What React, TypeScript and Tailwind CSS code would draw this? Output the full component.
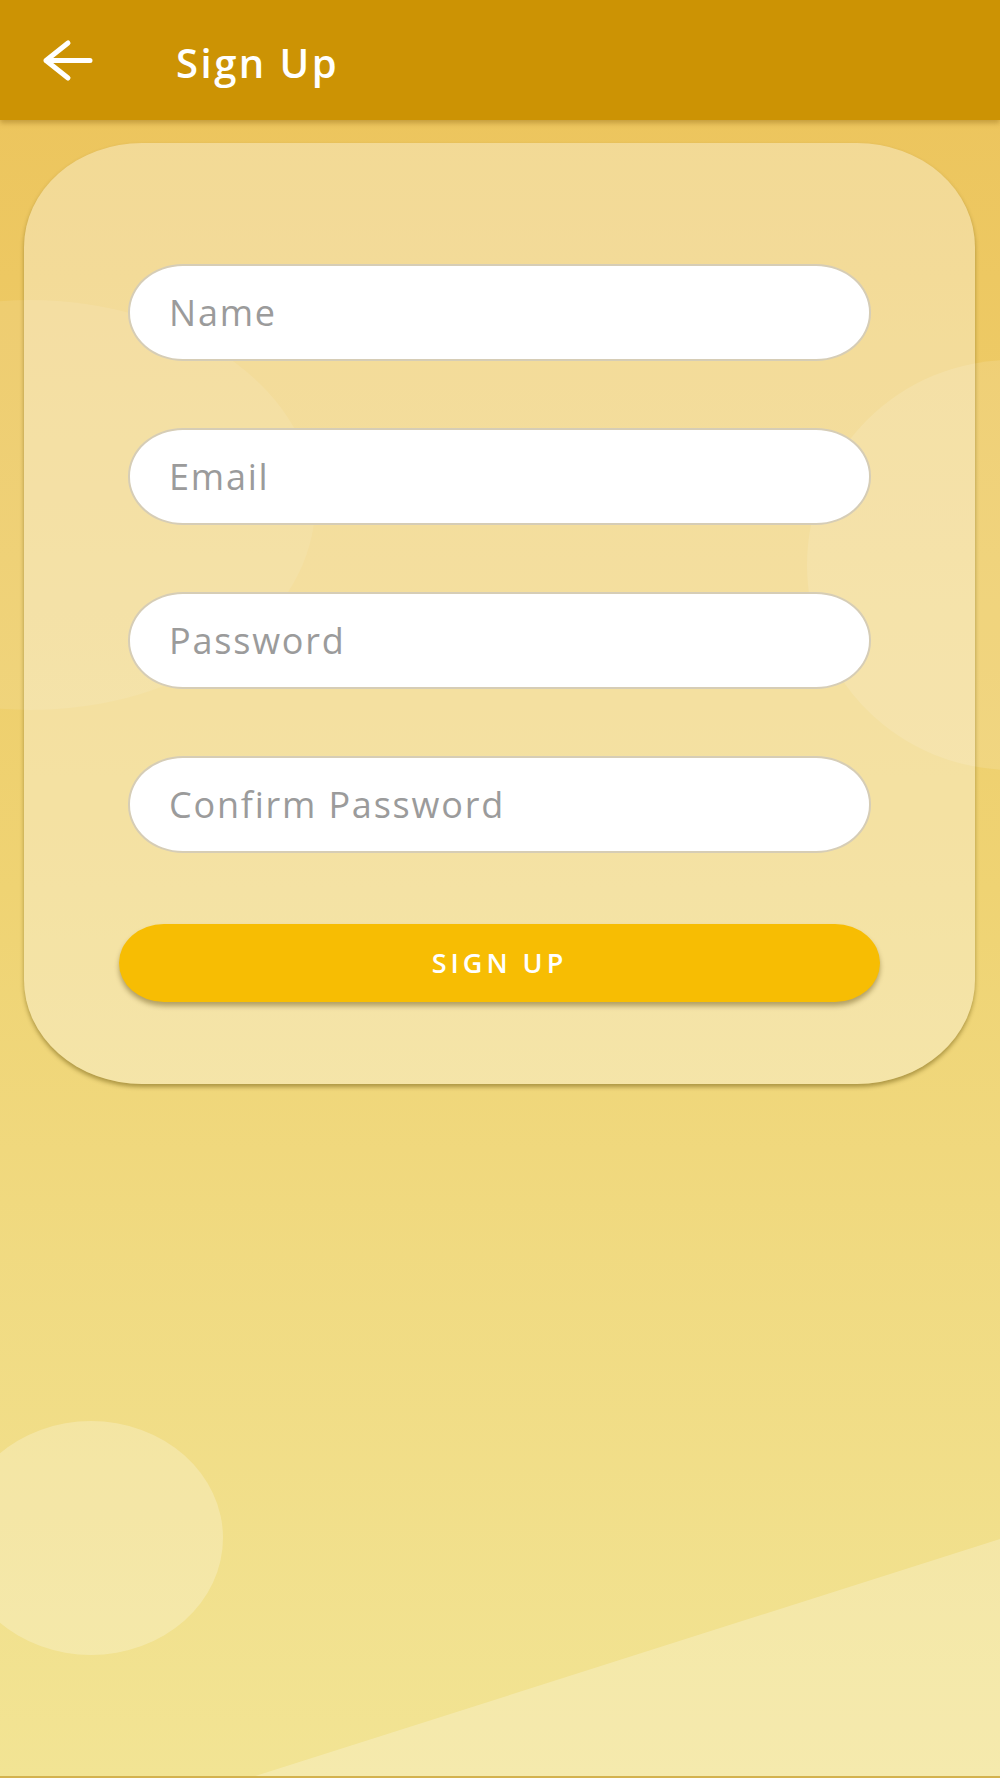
import React from "react";

const fields = ["Name", "Email", "Password", "Confirm Password"];

function BackArrow() {
  return (
    <svg width="52" height="44" viewBox="0 0 52 44" fill="none">
      <path
        d="M26 5 L4 22.5 L26 40 M4 22.5 H48"
        stroke="white"
        strokeWidth="5"
        strokeLinecap="round"
        strokeLinejoin="round"
      />
    </svg>
  );
}

function Backdrop() {
  return (
    <svg
      className="absolute inset-0 pointer-events-none"
      width="1000"
      height="1778"
      viewBox="0 0 1000 1778"
    >
      <ellipse cx="30" cy="505" rx="285" ry="205" fill="white" opacity="0.09" />
      <circle cx="1012" cy="565" r="205" fill="white" opacity="0.12" />
      <ellipse cx="91" cy="1538" rx="132" ry="117" fill="white" opacity="0.24" />
      <polygon points="249,1778 1000,1539 1000,1778" fill="white" opacity="0.24" />
    </svg>
  );
}

export default function App() {
  return (
    <div
      className="relative w-full min-h-[1778px] overflow-hidden bg-gradient-to-b from-[#ECC35A] via-[#EFD373] to-[#F2E494] border-b-2 border-[#D3B24E]"
      style={{ fontFamily: '"Open Sans", "Noto Sans", sans-serif' }}
    >
      <Backdrop />

      <header className="relative z-10 h-[120px] bg-[#CC9304] flex items-center shadow-[0_3px_5px_rgba(120,80,0,0.35)]">
        <div className="ml-[42px] flex items-center">
          <BackArrow />
        </div>
        <h1 className="ml-[82px] mt-[6px] text-[40px] font-semibold text-white tracking-[2.5px]">
          Sign Up
        </h1>
      </header>

      <main className="relative z-0 mx-[24px] mr-[25px] mt-[23px] rounded-[118px/104px] bg-white/35 shadow-[0_3px_4px_rgba(90,70,0,0.45)] px-[95px] pt-[121px] pb-[82px]">
        <div className="flex flex-col gap-[67px] px-[9px]">
          {fields.map((f) => (
            <input
              key={f}
              type={f.includes("Password") ? "password" : "text"}
              placeholder={f}
              className="h-[97px] w-full rounded-[55px/48px] border-2 border-[#D6CDB6] bg-white pl-[39px] text-[36px] tracking-[1.8px] text-[#555] placeholder:text-[#9B9B9B] outline-none"
            />
          ))}
        </div>
        <button className="mt-[71px] h-[78px] w-full rounded-[45px/39px] bg-[#F7BD03] text-white text-[27px] font-semibold tracking-[4px] shadow-[0_4px_5px_rgba(80,60,0,0.4)]">
          SIGN UP
        </button>
      </main>
    </div>
  );
}
